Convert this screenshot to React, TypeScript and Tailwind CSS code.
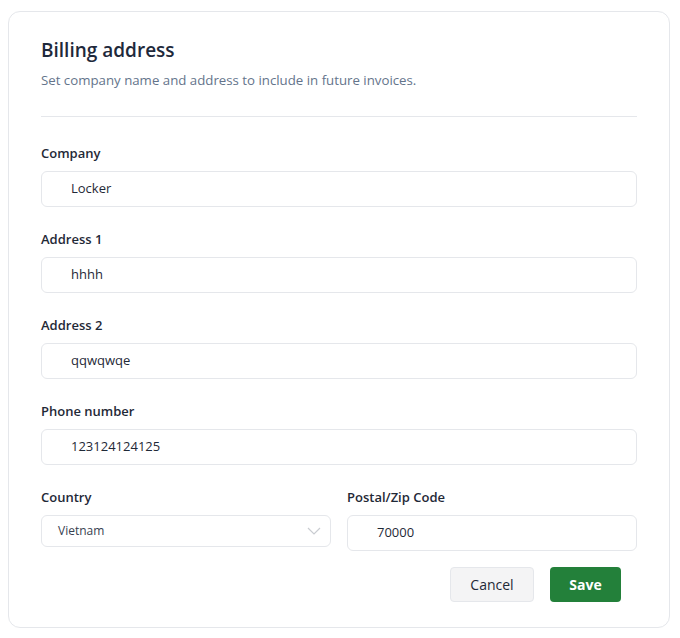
const fields = [
  { label: "Company", value: "Locker" },
  { label: "Address 1", value: "hhhh" },
  { label: "Address 2", value: "qqwqwqe" },
  { label: "Phone number", value: "123124124125" },
];

function Label({ children }: { children: React.ReactNode }) {
  return (
    <div className="mb-2 text-[13px] leading-5 font-semibold text-[#1f2937]">
      {children}
    </div>
  );
}

function TextBox({ value }: { value: string }) {
  return (
    <div className="flex h-9 items-center rounded-md border border-[#e5e7eb] bg-white pl-[29px] text-[13px] text-[#1f2937]">
      {value}
    </div>
  );
}

export default function App() {
  return (
    <div
      className="min-h-[638px] bg-white pt-[11px] px-2"
      style={{ fontFamily: '"Segoe UI", "Open Sans", sans-serif' }}
    >
      <div className="w-[662px] rounded-xl border border-[#e5e7eb] bg-white px-8 pt-[26px] pb-[25px]">
        {/* Header */}
        <h1 className="text-[19px] leading-6 font-semibold text-[#1e293b]">Billing address</h1>
        <p className="mt-2 text-[13.25px] leading-5 text-[#64748b]">
          Set company name and address to include in future invoices.
        </p>
        <div className="mt-[26px] border-t border-[#e5e7eb]" />

        {/* Fields */}
        <div className="mt-[26px] flex flex-col gap-[22px]">
          {fields.map((f) => (
            <div key={f.label}>
              <Label>{f.label}</Label>
              <TextBox value={f.value} />
            </div>
          ))}

          <div className="grid grid-cols-2 gap-4">
            <div>
              <Label>Country</Label>
              <div className="flex h-8 items-center justify-between rounded-md border border-[#e5e7eb] bg-white pl-4 pr-[9px] text-xs text-[#374151]">
                <span>Vietnam</span>
                <svg width="14" height="8" viewBox="0 0 14 8" fill="none" className="text-[#c9ccd1]">
                  <path d="M1 1l6 6 6-6" stroke="currentColor" strokeWidth="1.2" />
                </svg>
              </div>
            </div>
            <div>
              <Label>Postal/Zip Code</Label>
              <TextBox value="70000" />
            </div>
          </div>
        </div>

        {/* Actions */}
        <div className="mt-4 flex justify-end gap-4 pr-4">
          <button className="h-[35px] w-[84px] rounded border border-[#e5e7eb] bg-[#f4f4f5] text-sm font-medium text-[#1f2937]">
            Cancel
          </button>
          <button className="h-[35px] w-[71px] rounded bg-[#23803a] text-sm font-bold text-white">
            Save
          </button>
        </div>
      </div>
    </div>
  );
}
